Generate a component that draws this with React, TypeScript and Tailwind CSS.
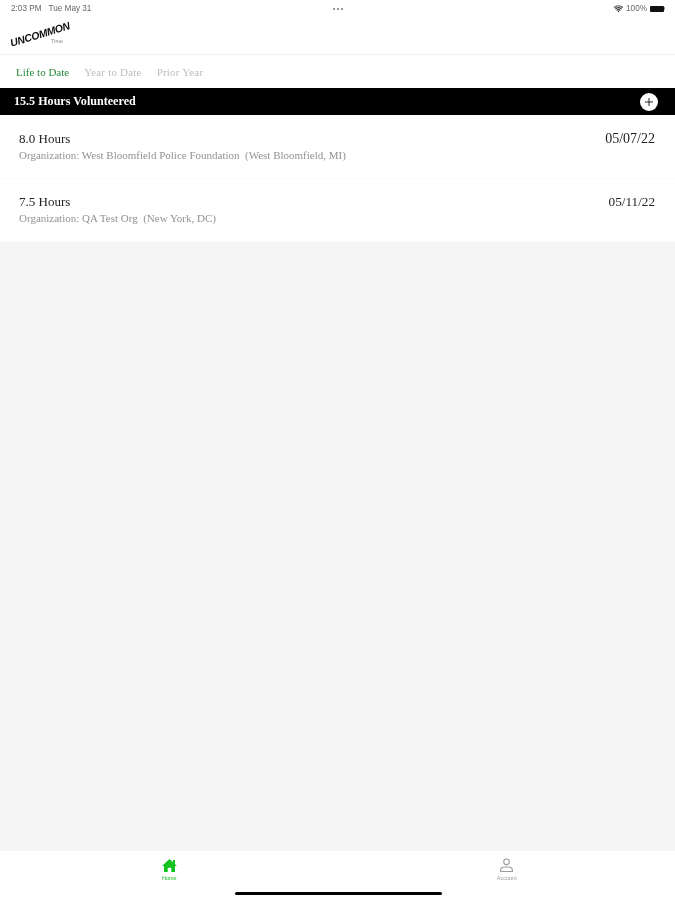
import { Wifi } from "lucide-react";

const serif = "font-['Liberation_Serif',serif]";
const sans = "font-['Liberation_Sans',sans-serif]";

function Row({ hours, org, date, second }: { hours: string; org: string; date: string; second?: boolean }) {
  return (
    <div className={`flex h-[63.5px] items-start justify-between border-b border-[#fafafa] bg-white pl-[19px] pr-[20px] ${second ? "pt-[14px]" : "pt-[15px]"}`}>
      <div>
        <div className="text-[13px] leading-[17px] text-[#222]">{hours}</div>
        <div className="mt-[1px] whitespace-pre text-[11px] leading-[15px] text-[#929292]">{org}</div>
      </div>
      <div className={`leading-[17px] text-[#222] ${second ? "text-[13.2px]" : "text-[14px]"}`}>{date}</div>
    </div>
  );
}

export default function App() {
  return (
    <div className={`relative flex h-[900px] w-[675px] flex-col overflow-hidden bg-[#f5f5f5] ${serif} blur-[0.5px]`}>
      <div className={`grid h-[17px] grid-cols-3 items-center bg-white pl-[11px] pr-[10px] pt-[1px] text-[8.2px] text-[#666] ${sans}`}>
        <div className="flex gap-[7px]">
          <span>2:03 PM</span>
          <span>Tue May 31</span>
        </div>
        <div className="flex justify-center gap-[2px]">
          <span className="h-[2px] w-[2px] rounded-full bg-[#777]" />
          <span className="h-[2px] w-[2px] rounded-full bg-[#777]" />
          <span className="h-[2px] w-[2px] rounded-full bg-[#777]" />
        </div>
        <div className="flex items-center justify-end gap-[3px]">
          <Wifi size={9} strokeWidth={3.5} className="text-[#444]" />
          <span>100%</span>
          <div className="flex items-center">
            <div className="h-[6px] w-[14px] rounded-[1px] bg-[#111]" />
            <div className="h-[3px] w-[1px] bg-[#999]" />
          </div>
        </div>
      </div>

      <div className="relative h-[38px] border-b border-[#f0f0f0] bg-white">
        <span className={`absolute left-[9px] top-[11px] -rotate-[17deg] text-[10.5px] font-bold italic leading-[12px] tracking-[-0.3px] text-[#111] ${sans}`}>
          UNCOMMON
        </span>
        <span className={`absolute left-[51px] top-[21px] text-[5.5px] leading-[7px] text-[#888] ${sans}`}>Time</span>
      </div>

      <div className="flex h-[33px] items-center gap-[15px] bg-white pl-[16px] pt-[2px] text-[11px]">
        <span className="text-[#2a8a3c]">Life to Date</span>
        <span className="tracking-[0.2px] text-[#bdbdbd]">Year to Date</span>
        <span className="tracking-[0.2px] text-[#bdbdbd]">Prior Year</span>
      </div>

      <div className="flex h-[27px] items-center justify-between bg-black pl-[14px] pr-[17px]">
        <span className="text-[12.1px] font-bold text-white">15.5 Hours Volunteered</span>
        <div className="flex h-[18px] w-[18px] items-center justify-center rounded-full bg-white">
          <svg width="10" height="10" viewBox="0 0 10 10">
            <path d="M5 1v8M1 5h8" stroke="#222" strokeWidth="1" />
          </svg>
        </div>
      </div>

      <Row hours="8.0 Hours" org="Organization: West Bloomfield Police Foundation  (West Bloomfield, MI)" date="05/07/22" />
      <Row second hours="7.5 Hours" org="Organization: QA Test Org  (New York, DC)" date="05/11/22" />

      <div className="flex-1" />

      <div className={`flex h-[49px] bg-white ${sans}`}>
        <div className="flex flex-1 justify-center pl-[1px] pt-[7px]">
          <div className="flex flex-col items-center">
            <svg width="15" height="15" viewBox="0 0 15 15" fill="#12c21e">
              <path d="M7.500 1 L15 8 H13 V14 H9.300 V9.800 H5.700 V14 H2 V8 H0 Z" />
              <rect x="11" y="2" width="2" height="4" />
            </svg>
            <span className="mt-[2px] text-[5.5px] leading-[7px] text-[#12c21e]">Home</span>
          </div>
        </div>
        <div className="flex flex-1 justify-center pl-[1px] pt-[7px]">
          <div className="flex flex-col items-center">
            <svg width="15" height="15" viewBox="0 0 15 15" fill="none" stroke="#9a9a9a" strokeWidth="1.1">
              <circle cx="7.500" cy="3.800" r="2.800" />
              <path d="M1.500 13.500 C1.500 11 2.500 9 5 9 H10 C12.500 9 13.500 11 13.500 13.500 Z" />
            </svg>
            <span className="mt-[2px] text-[5.5px] leading-[7px] text-[#9a9a9a]">Account</span>
          </div>
        </div>
      </div>

      <div className="absolute bottom-[5px] left-[235px] h-[3px] w-[207px] rounded-full bg-black" />
    </div>
  );
}
